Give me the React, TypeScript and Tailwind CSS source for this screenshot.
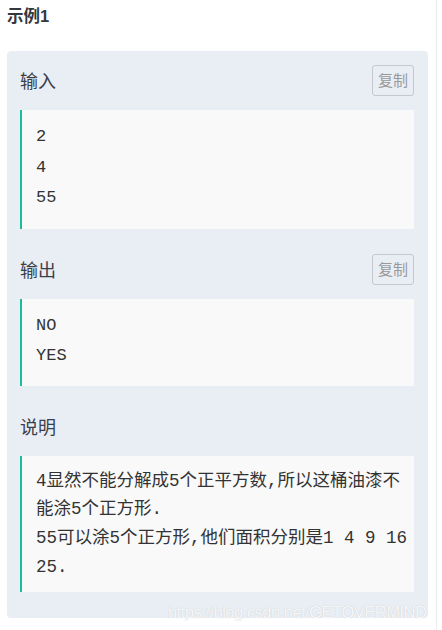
export default function App() {
  const mono = "font-['Liberation_Mono','Noto_Sans_CJK_SC',monospace]";

  const Section = ({
    title,
    copy,
    children,
  }: {
    title: string;
    copy?: boolean;
    children: React.ReactNode;
  }) => (
    <div className="mb-[25px]">
      <div className="flex items-center justify-between h-[31px] mb-[14px]">
        <span className="text-[18px] text-[#3a3f4a]">{title}</span>
        {copy && (
          <button className="h-[31px] w-[42px] border border-[#c4c7cc] rounded-[3px] text-[15px] text-[#999] flex items-center justify-center">
            复制
          </button>
        )}
      </div>
      {children}
    </div>
  );

  return (
    <div className="w-[437px] min-h-[630px] border-r border-[#ececec] bg-white font-['Noto_Sans_CJK_SC',sans-serif] relative">
      <div className="pl-[7px] pt-[5px] h-[51px]">
        <h3 className="text-[16.5px] font-bold text-[#333840] leading-[22px] font-['Liberation_Sans','Noto_Sans_CJK_SC',sans-serif]">
          示例1
        </h3>
      </div>
      <div className="ml-[7px] w-[421px] bg-[#e9eef5] rounded-[4px] pt-[14px] pl-[13px] pr-[14px] pb-px">
        <Section title="输入" copy>
          <pre
            className={`${mono} bg-[#f9f9f9] border-l-[2px] border-[#1abc9c] pl-[14px] pt-[12px] pb-[15px] text-[17px] leading-[30.5px] text-[#333]`}
          >
            {"2\n4\n55"}
          </pre>
        </Section>
        <Section title="输出" copy>
          <pre
            className={`${mono} bg-[#f9f9f9] border-l-[2px] border-[#1abc9c] pl-[14px] pt-[12px] pb-[14px] text-[17px] leading-[30.5px] text-[#333]`}
          >
            {"NO\nYES"}
          </pre>
        </Section>
        <Section title="说明">
          <div
            className={`${mono} bg-[#f9f9f9] border-l-[2px] border-[#1abc9c] pl-[14px] pr-[4px] pt-[11px] pb-[11px] text-[17.5px] leading-[28.7px] text-[#333] break-all`}
          >
            <p>4显然不能分解成5个正平方数,所以这桶油漆不能涂5个正方形.</p>
            <p>55可以涂5个正方形,他们面积分别是1 4 9 16 25.</p>
          </div>
        </Section>
      </div>
      <span className="absolute left-[168px] top-[600px] whitespace-nowrap text-[16.5px] tracking-[-0.5px] leading-[24px] text-white/85 font-['Liberation_Sans',sans-serif] [text-shadow:0_0_1px_rgba(120,120,120,0.4)] pointer-events-none">
        https://blog.csdn.net/GETOVERMIND
      </span>
    </div>
  );
}
